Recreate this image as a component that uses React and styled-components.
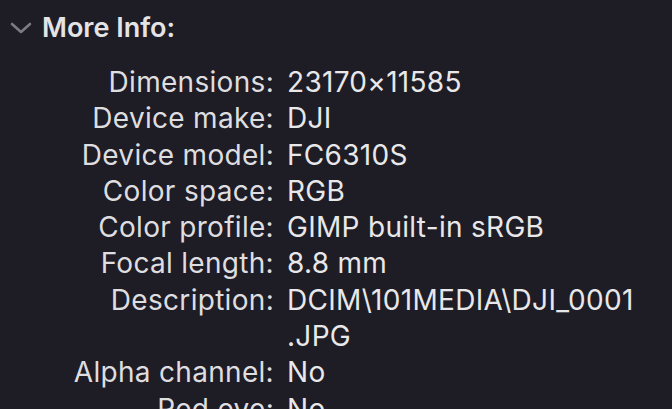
import React from "react";
import styled, { createGlobalStyle } from "styled-components";

const Global = createGlobalStyle`
  html, body { margin: 0; padding: 0; background: #1e1c24; }
  body { overflow: hidden; }
`;

const Panel = styled.div`
  width: 672px;
  height: 409px;
  overflow: hidden;
  background: #1e1c24;
  font-family: Inter, "Liberation Sans", sans-serif;
  -webkit-font-smoothing: antialiased;
`;

const Header = styled.div`
  display: flex;
  align-items: center;
  gap: 10px;
  padding: 10px 0 0 10px;
  height: 36px;
`;

const Title = styled.span`
  font-size: 27px;
  font-weight: 600;
  color: #e4e4e6;
  line-height: 36px;
`;

const Grid = styled.div`
  display: grid;
  grid-template-columns: 274px 1fr;
  column-gap: 13px;
  margin-top: 18px;
  font-size: 28px;
  letter-spacing: 0.3px;
  line-height: 36.3px;
`;

const Label = styled.div`
  text-align: right;
  color: #dedee0;
  white-space: nowrap;
`;

const Value = styled.div`
  color: #e8e8ea;
  white-space: nowrap;
`;

const Chevron = () => (
  <svg width="22" height="12" viewBox="0 0 22 12" fill="none">
    <path d="M2 2 L11 10 L20 2" stroke="#7c7b82" strokeWidth="2.6" strokeLinecap="round" strokeLinejoin="round" />
  </svg>
);

const rows = [
  ["Dimensions:", "23170×11585"],
  ["Device make:", "DJI"],
  ["Device model:", "FC6310S"],
  ["Color space:", "RGB"],
  ["Color profile:", "GIMP built-in sRGB"],
  ["Focal length:", "8.8 mm"],
  ["Description:", <>DCIM\101MEDIA\DJI_0001<br />.JPG</>],
  ["Alpha channel:", "No"],
  ["Red eye:", "No"],
];

export default function App() {
  return (
    <Panel>
      <Global />
      <Header>
        <Chevron />
        <Title>More Info:</Title>
      </Header>
      <Grid>
        {rows.map(([l, v]) => (
          <React.Fragment key={l}>
            <Label>{l}</Label>
            <Value>{v}</Value>
          </React.Fragment>
        ))}
      </Grid>
    </Panel>
  );
}
